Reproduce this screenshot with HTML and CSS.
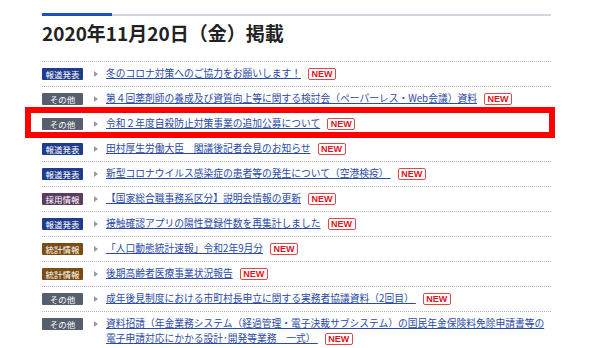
FILE: index.html
```html
<!DOCTYPE html>
<html lang="ja">
<head>
    <meta charset="UTF-8">
    <meta name="viewport" content="width=device-width, initial-scale=1.0">
    <title>新着情報</title>
    <link rel="stylesheet" href="styles.css">
</head>
<body>
    <div class="container">
        <div class="head-bar">
            <div class="bar-main"></div>
            <div class="bar-rest"></div>
        </div>
        <h2 class="date-title">2020年11月20日（金）掲載</h2>

        <ul class="news-list">
            <li class="news-item">
                <span class="label label-press">報道発表</span>
                <span class="arrow"></span>
                <div class="news-text"><a href="#">冬のコロナ対策へのご協力をお願いします！</a><span class="new">NEW</span></div>
            </li>
            <li class="news-item">
                <span class="label label-other">その他</span>
                <span class="arrow"></span>
                <div class="news-text"><a href="#">第４回薬剤師の養成及び資質向上等に関する検討会（ペーパーレス・Web会議）資料</a><span class="new">NEW</span></div>
            </li>
            <li class="news-item marked">
                <span class="label label-other">その他</span>
                <span class="arrow"></span>
                <div class="news-text"><a href="#">令和２年度自殺防止対策事業の追加公募について</a><span class="new">NEW</span></div>
            </li>
            <li class="news-item">
                <span class="label label-press">報道発表</span>
                <span class="arrow"></span>
                <div class="news-text"><a href="#">田村厚生労働大臣　閣議後記者会見のお知らせ</a><span class="new">NEW</span></div>
            </li>
            <li class="news-item">
                <span class="label label-press">報道発表</span>
                <span class="arrow"></span>
                <div class="news-text"><a href="#">新型コロナウイルス感染症の患者等の発生について（空港検疫）&nbsp;</a><span class="new">NEW</span></div>
            </li>
            <li class="news-item">
                <span class="label label-recruit">採用情報</span>
                <span class="arrow"></span>
                <div class="news-text"><a href="#">【国家総合職事務系区分】説明会情報の更新</a><span class="new">NEW</span></div>
            </li>
            <li class="news-item">
                <span class="label label-press">報道発表</span>
                <span class="arrow"></span>
                <div class="news-text"><a href="#">接触確認アプリの陽性登録件数を再集計しました</a><span class="new">NEW</span></div>
            </li>
            <li class="news-item">
                <span class="label label-stat">統計情報</span>
                <span class="arrow"></span>
                <div class="news-text"><a href="#">「人口動態統計速報」令和2年9月分</a><span class="new">NEW</span></div>
            </li>
            <li class="news-item">
                <span class="label label-stat">統計情報</span>
                <span class="arrow"></span>
                <div class="news-text"><a href="#">後期高齢者医療事業状況報告</a><span class="new">NEW</span></div>
            </li>
            <li class="news-item">
                <span class="label label-other">その他</span>
                <span class="arrow"></span>
                <div class="news-text"><a href="#">成年後見制度における市町村長申立に関する実務者協議資料（2回目）&nbsp;</a><span class="new">NEW</span></div>
            </li>
            <li class="news-item">
                <span class="label label-other">その他</span>
                <span class="arrow"></span>
                <div class="news-text"><a href="#">資料招請（年金業務システム（経過管理・電子決裁サブシステム）の国民年金保険料免除申請書等の電子申請対応にかかる設計･開発等業務　一式）&nbsp;</a><span class="new">NEW</span></div>
            </li>
        </ul>
    </div>
</body>
</html>
```

FILE: styles.css
```css
body {
    margin: 0;
    padding: 0;
    background-color: white;
    font-family: "Noto Sans CJK JP", "Noto Sans", sans-serif;
    color: #222;
}

.container {
    width: 509px;
    margin-left: 42px;
    padding-top: 13px;
}

.head-bar {
    display: flex;
    align-items: flex-start;
}

.bar-main {
    width: 70px;
    height: 3px;
    background-color: #1f4fc4;
}

.bar-rest {
    flex: 1;
    height: 2px;
    margin-top: 0.5px;
    background-color: #d2d6de;
}

.date-title {
    margin: 5px 0 16px;
    font-size: 19px;
    line-height: 24px;
    font-weight: bold;
    color: #222;
}

.news-list {
    list-style: none;
    margin: 0;
    padding: 0;
}

.news-item {
    display: flex;
    align-items: flex-start;
    padding: 4px 0 5px;
    border-top: 1px dotted #b4b4b4;
    font-size: 9.75px;
    line-height: 15px;
}

.news-item.marked {
    position: relative;
}

.news-item.marked::after {
    content: "";
    position: absolute;
    top: -5px;
    bottom: -2px;
    left: -17px;
    right: -4px;
    border: 6px solid #ff0000;
}

.label {
    flex: none;
    width: 41px;
    height: 12px;
    margin-top: 1.5px;
    border-radius: 1px;
    color: white;
    font-size: 8.5px;
    line-height: 12px;
    text-align: center;
}

.label-press {
    background-color: #1e3b8c;
}

.label-other {
    background-color: #575e6e;
}

.label-recruit {
    background-color: #5a3b62;
}

.label-stat {
    background-color: #7a4b12;
}

.arrow {
    flex: none;
    width: 0;
    height: 0;
    margin: 4.5px 8px 0 11px;
    border-top: 3px solid transparent;
    border-bottom: 3px solid transparent;
    border-left: 4px solid #9a9a9a;
}

.news-text {
    flex: 1;
}

.news-text a {
    color: #2a4aa6;
    text-decoration: underline;
    vertical-align: top;
}

.new {
    display: inline-block;
    box-sizing: border-box;
    width: 28px;
    height: 12px;
    margin: 1.5px 0 0 7px;
    border: 1px solid #e0474c;
    border-radius: 2px;
    color: #d9141b;
    font-family: "Liberation Sans", Arial, sans-serif;
    font-size: 9px;
    font-weight: bold;
    line-height: 10px;
    text-align: center;
    vertical-align: top;
}
```
